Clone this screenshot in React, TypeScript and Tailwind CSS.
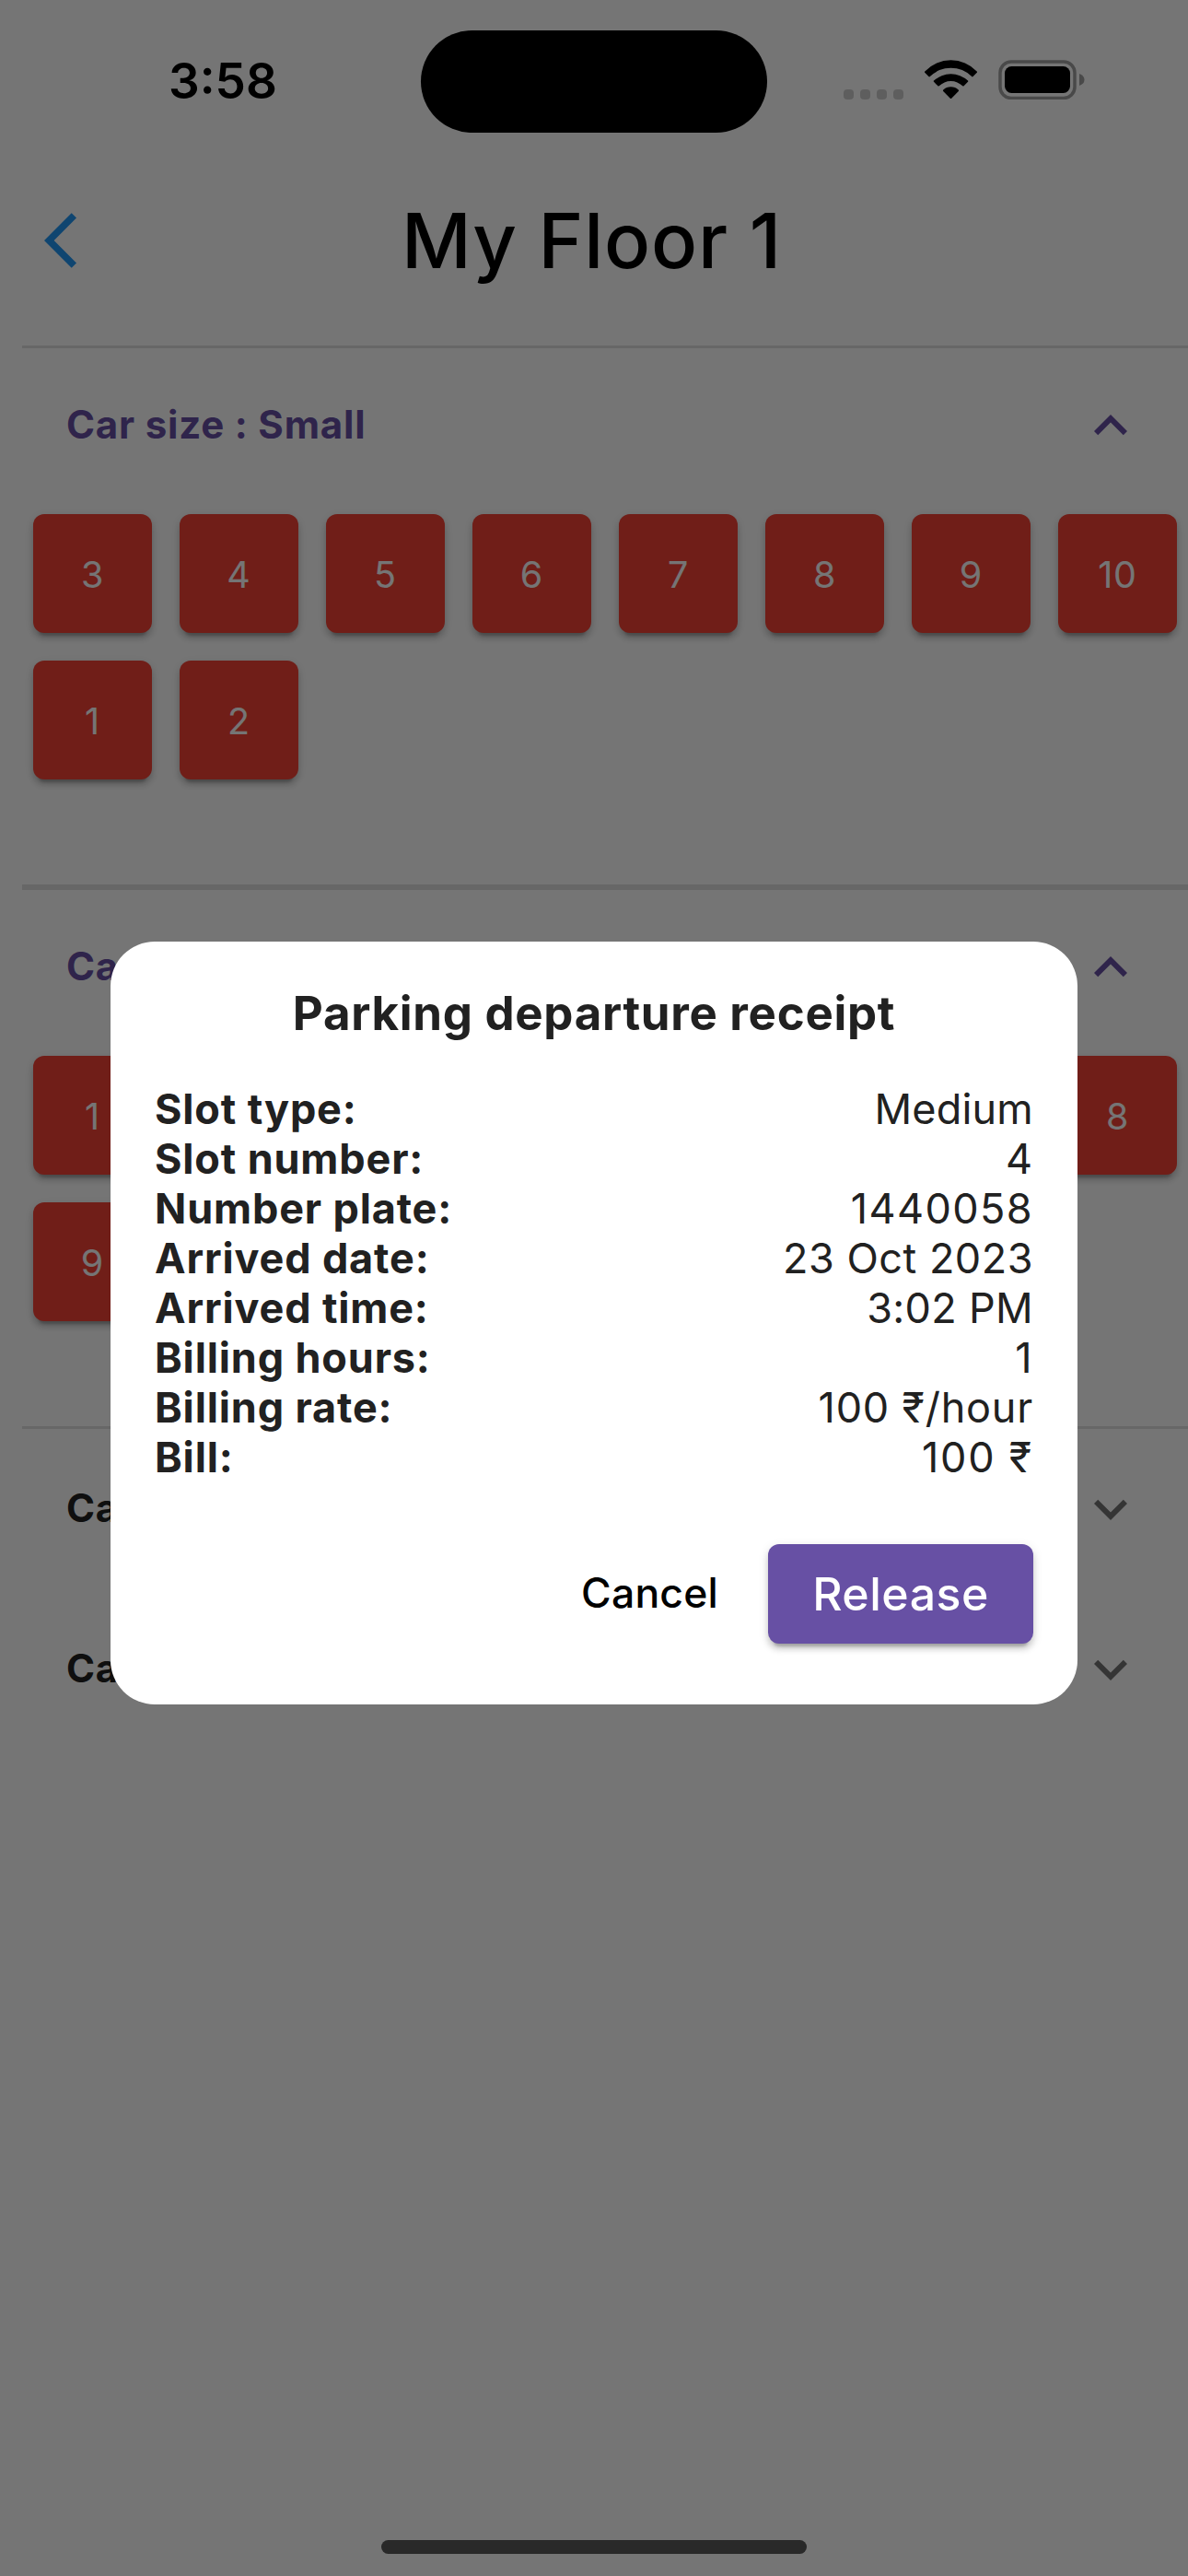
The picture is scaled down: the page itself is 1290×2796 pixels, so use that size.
import React from "react";

type Section = { title: string; rows?: number[][] };

const sections: Section[] = [
  { title: "Car size : Small", rows: [[3, 4, 5, 6, 7, 8, 9, 10], [1, 2]] },
  { title: "Car size : Medium", rows: [[1, 2, 3, 4, 5, 6, 7, 8], [9]] },
  { title: "Car size : Large" },
  { title: "Car size : XLarge" },
];

const receipt: [label: string, value: string, tracking: string][] = [
  ["Slot type:", "Medium", "tracking-[0.2px]"],
  ["Slot number:", "4", "tracking-[1px]"],
  ["Number plate:", "1440058", "tracking-[1.4px]"],
  ["Arrived date:", "23 Oct 2023", "tracking-[0.5px]"],
  ["Arrived time:", "3:02 PM", "tracking-[0.3px]"],
  ["Billing hours:", "1", "tracking-[1.4px]"],
  ["Billing rate:", "100 ₹/hour", "tracking-[0.8px]"],
  ["Bill:", "100 ₹", "tracking-[1.8px]"],
];

const elevation =
  "shadow-[0_9px_3px_-6px_rgba(0,0,0,0.2),0_6px_6px_0_rgba(0,0,0,0.14),0_3px_12px_0_rgba(0,0,0,0.12)]";

function ChevronUp() {
  return (
    <svg className="size-[72px] fill-[#6750a4]" viewBox="0 0 24 24">
      <path d="M12 8l-6 6 1.41 1.41L12 10.83l4.59 4.58L18 14z" />
    </svg>
  );
}

function ChevronDown() {
  return (
    <svg className="size-[72px] fill-[#757575]" viewBox="0 0 24 24">
      <path d="M16.59 8.59L12 13.17 7.41 8.59 6 10l6 6 6-6z" />
    </svg>
  );
}

function StatusBar() {
  return (
    <div className="flex h-[177px] items-center">
      <div className="w-[457px] pl-[183px] text-[53px] leading-none font-semibold text-black">3:58</div>
      <div className="h-[111px] w-[376px] rounded-full bg-black" />
      <div className="mt-[27px] ml-[83px] flex gap-[7px]">
        {[0, 1, 2, 3].map((i) => (
          <span key={i} className="size-[11px] rounded-[4px] bg-[#cecece]" />
        ))}
      </div>
      <svg className="mb-[5px] ml-[23px] h-[42px] w-[57px] fill-black" viewBox="0 0 57 42">
        <path d="M.3 12.5A38.7 38.7 0 0 1 56.7 12.5Q57.3 13.2 56.8 13.8L52.6 18.1Q51.9 18.7 51.2 18.1A32 32 0 0 0 5.8 18.1Q5.1 18.7 4.4 18.1L.2 13.8Q-.3 13.2 .3 12.5Z" />
        <path d="M10 22.6A27 27 0 0 1 47 22.6Q47.6 23.2 47 23.8L42.6 28.3Q42 28.8 41.3 28.3A18.4 18.4 0 0 0 15.7 28.3Q15 28.8 14.4 28.3L10 23.8Q9.4 23.2 10 22.6Z" />
        <path d="M20.3 32.6A12 12 0 0 1 36.7 32.6Q37.4 33.3 36.8 34L29.2 41.7Q28.5 42.3 27.8 41.7L20.2 34Q19.6 33.3 20.3 32.6Z" />
      </svg>
      <svg className="mb-[5px] ml-[23px] h-[43px] w-[94px]" viewBox="0 0 94 43">
        <rect x="2" y="2" width="81" height="39.500" rx="12" fill="none" stroke="#a0a0a0" strokeWidth="3.500" />
        <rect x="7" y="7" width="71" height="29" rx="7.5" />
        <path d="M88 15v13q5.5-2 5.500-6.500t-5.500-6.500z" fill="#a0a0a0" />
      </svg>
    </div>
  );
}

function SlotSection({ title, rows }: Section) {
  const open = Boolean(rows);
  return (
    <section className={open ? "h-[588px] border-y-3 border-[#e0e0e0]" : "h-[174px] border-y-3 border-transparent"}>
      <div className="flex h-[168px] items-center justify-between pr-12 pl-12">
        <h2
          className={
            open
              ? "pb-[3px] text-[42px] leading-none font-[650] tracking-[0.8px] text-[#6750a4]"
              : "pb-[3px] text-[42px] leading-none font-[650] tracking-[0.8px] text-[#212121]"
          }
        >
          {title}
        </h2>
        {open ? <ChevronUp /> : <ChevronDown />}
      </div>
      {rows && (
        <div className="mt-3 flex flex-col gap-[30px] pl-3">
          {rows.map((row, i) => (
            <div key={i} className="flex gap-[30px]">
              {row.map((slot) => (
                <div
                  key={slot}
                  className={`flex size-[129px] items-center justify-center rounded-xl bg-[#f44336] pt-[3px] text-[39.5px] leading-[40px] tracking-[0.8px] text-white ${elevation}`}
                >
                  {slot}
                </div>
              ))}
            </div>
          ))}
        </div>
      )}
    </section>
  );
}

function ReceiptDialog() {
  return (
    <div className="absolute inset-0 flex items-start justify-center bg-black/54 pt-[1021.5px]">
      <div className="w-[1050px] rounded-[48px] bg-white px-12 pt-12 pb-[66px] text-[#212121]">
        <h3 className="text-center text-[51px] leading-[60px] font-[650] tracking-[0.7px]">
          Parking departure receipt
        </h3>
        <dl className="mt-[47px] text-[45px] leading-[54px]">
          {receipt.map(([label, value, tracking]) => (
            <div key={label} className="flex h-[54px] justify-between">
              <dt className="font-[650] tracking-[0.85px]">{label}</dt>
              <dd className={`font-[370] ${tracking}`}>{value}</dd>
            </div>
          ))}
        </dl>
        <div className="mt-[67px] flex items-center justify-end">
          <button className="mr-[54px] pb-px text-[44.5px] leading-none font-medium tracking-[0.2px] text-black">
            Cancel
          </button>
          <button
            className={`h-[108px] w-[288px] rounded-xl bg-[#6750a4] text-[50px] leading-none font-medium tracking-[0.5px] text-white ${elevation}`}
          >
            Release
          </button>
        </div>
      </div>
    </div>
  );
}

export default function App() {
  return (
    <div className="relative h-[2796px] w-[1290px] overflow-hidden bg-white font-['Inter',sans-serif]">
      <StatusBar />
      <header className="grid h-[168px] grid-cols-[200px_1fr_205px] items-center">
        <svg className="ml-[48px] h-[60px] w-[36px] fill-[#2196f3]" viewBox="0 2 12 20">
          <path d="M11.67 3.87L9.9 2.1 0 12l9.900 9.900 1.770-1.770L3.540 12z" />
        </svg>
        <h1 className="text-center text-[83px] leading-none font-[450] tracking-[0.8px] text-black">My Floor 1</h1>
      </header>
      <main className="pt-[30px] pl-6">
        {sections.map((s) => (
          <SlotSection key={s.title} {...s} />
        ))}
      </main>
      <ReceiptDialog />
      <div className="absolute bottom-6 left-[414px] h-[15px] w-[462px] rounded-full bg-[#292929]" />
    </div>
  );
}
